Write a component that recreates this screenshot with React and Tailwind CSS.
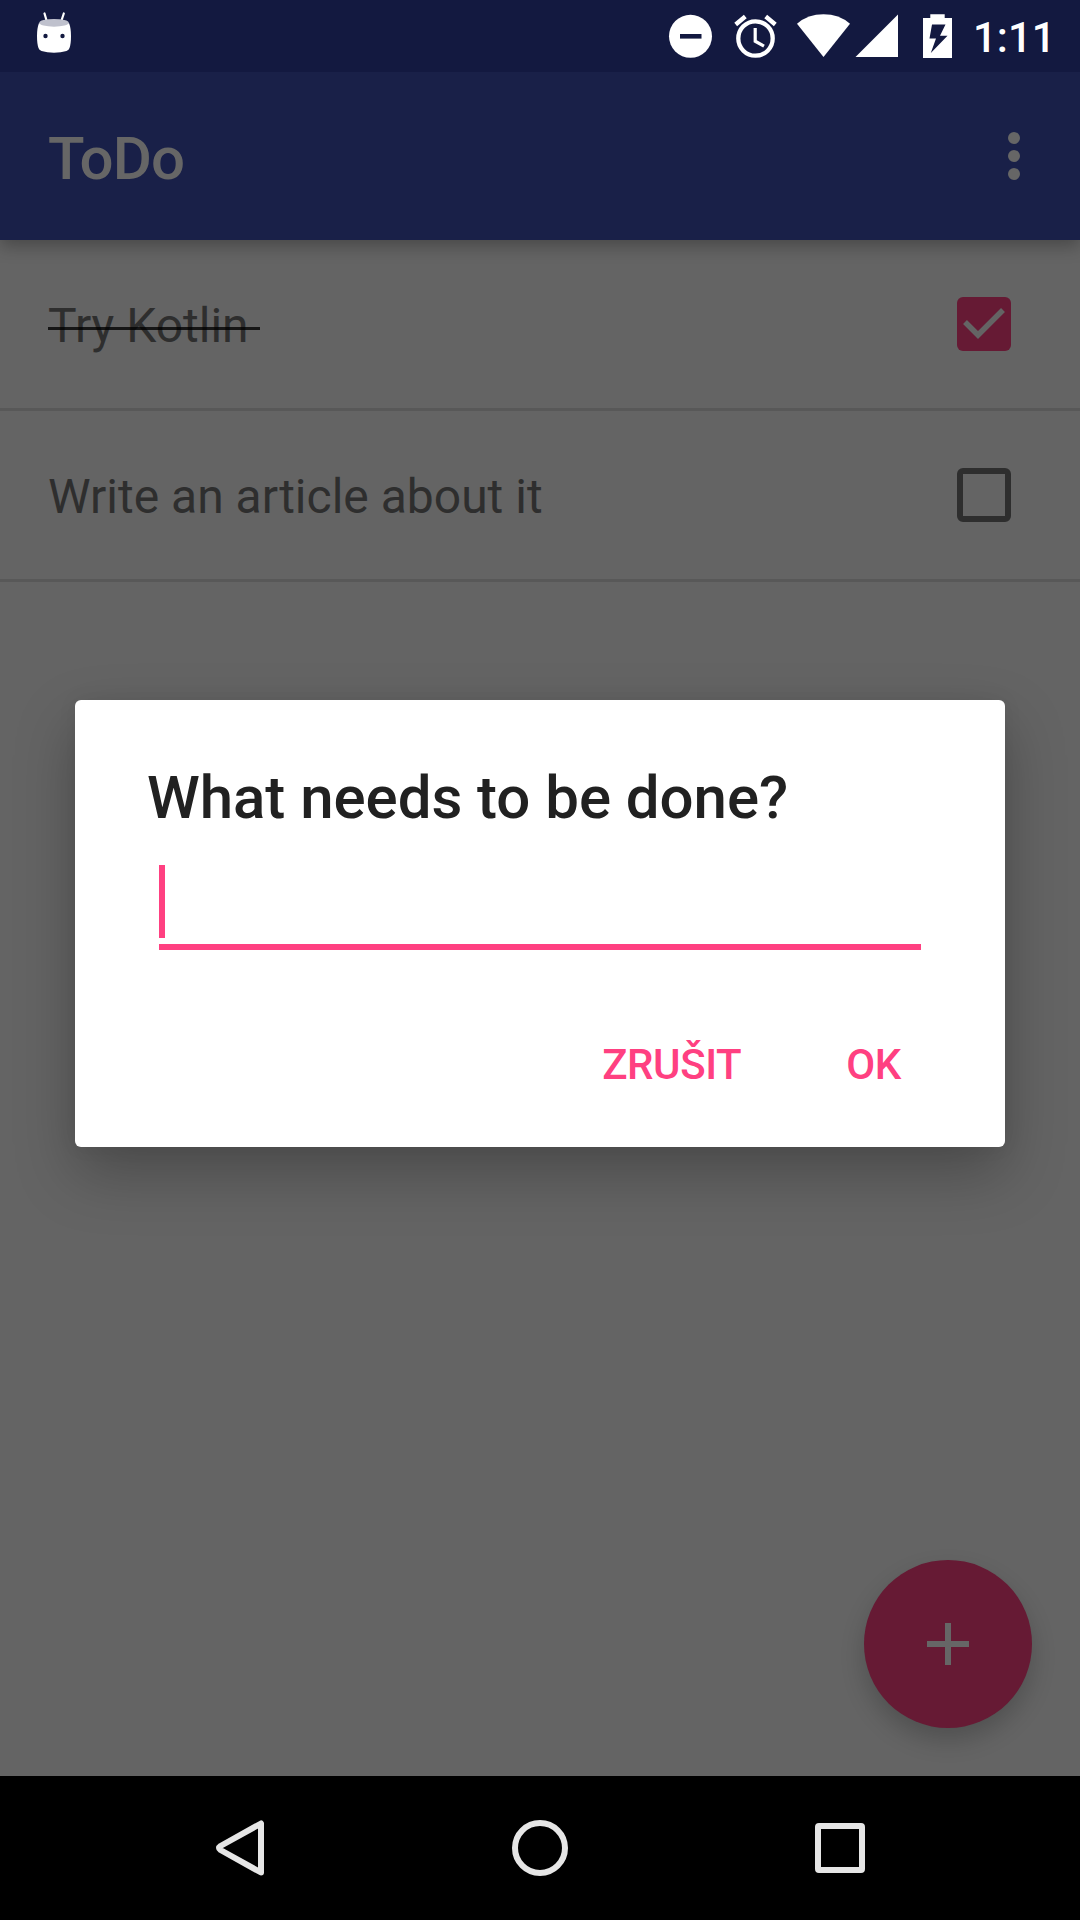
const font = "font-['Roboto',sans-serif]";

function StatusBar() {
  return (
    <div className="relative z-10 flex h-[72px] items-start justify-between bg-[#131940] text-white">
      <svg className="ml-[36px] mt-[12px]" width="36" height="42" viewBox="36 12 36 42">
        <path d="M44.5 13.5L47 22M63.8 13.5L61 22" stroke="#fff" strokeWidth="2.2" strokeLinecap="round" />
        <path d="M39 23Q54 29 69 23Q71 28 71 36Q71 44 69.5 48Q69 50 66.5 51Q61 52.8 54 52.8Q47 52.8 41.500 51Q39 50 38.500 48Q37 44 37 36Q37 28 39 23Z" fill="#fff" />
        <ellipse cx="54" cy="22.800" rx="14.800" ry="3.900" fill="#bfc1cd" />
        <circle cx="45.500" cy="36" r="2.200" fill="#131940" />
        <circle cx="62.500" cy="36" r="2.200" fill="#131940" />
      </svg>
      <div className="flex">
        <svg width="292" height="72" viewBox="664 0 292 72">
          <circle cx="690.500" cy="36.300" r="21.500" fill="#fff" />
          <rect x="680" y="34" width="21.500" height="4.600" fill="#131940" />
          <g fill="none" stroke="#fff">
            <circle cx="755.500" cy="38.500" r="17.200" strokeWidth="4.300" />
            <path d="M755.200 28v13.200l8.800 4.900" strokeWidth="3.200" />
            <path d="M735.700 24.500L745.300 16.500M775.300 24.500L765.700 16.500" strokeWidth="4.400" />
          </g>
          <path d="M797 23.700Q808 14.300 823.500 14.300Q839 14.300 850 23.700L823.500 57Z" fill="#fff" />
          <path d="M898 14.500V57H855.500Z" fill="#fff" />
          <path fillRule="evenodd" d="M930.300 14.300H944.700V18H952V58H923V18H930.300ZM932 24.500L929.500 38.500H936L930.800 53L947.500 35.700H940L945.500 24.500Z" fill="#fff" />
        </svg>
        <span className={`ml-[17px] w-[107px] text-[42px] font-medium leading-[76px] ${font}`}>1:11</span>
      </div>
    </div>
  );
}

function Toolbar() {
  return (
    <header className="relative flex h-[168px] items-center justify-between bg-[#192048] pl-[48px] pr-[60px] text-[#666] shadow-[0_6px_16px_rgba(0,0,0,0.28)]">
      <h1 className="pt-[5px] text-[60px] font-medium leading-[70px] tracking-[-0.9px]">ToDo</h1>
      <div className="flex flex-col gap-[6px]">
        <span className="size-3 rounded-full bg-[#666]" />
        <span className="size-3 rounded-full bg-[#666]" />
        <span className="size-3 rounded-full bg-[#666]" />
      </div>
    </header>
  );
}

function Checkbox({ checked }) {
  return checked ? (
    <span className="size-[54px] rounded-[6px] bg-[#661a34]">
      <svg width="54" height="54" viewBox="0 0 54 54" fill="none">
        <path d="M8 25L21 38L46 13" stroke="#646464" strokeWidth="5.500" />
      </svg>
    </span>
  ) : (
    <span className="size-[54px] rounded-[6px] border-[6px] border-[#2e2e2e]" />
  );
}

function TodoRow({ text, done }) {
  return (
    <li className="flex h-[171px] items-center justify-between border-b-[3px] border-[#585858] pl-[48px] pr-[69px]">
      <span className="relative whitespace-pre pt-[4px] text-[48px] leading-[56px] text-[#2e2e2e]">
        {text}
        {done && <span className="absolute left-0 top-[33px] h-[3px] w-[212px] bg-black/78" />}
      </span>
      <Checkbox checked={done} />
    </li>
  );
}

function Dialog() {
  return (
    <div className="absolute left-[75px] top-[700px] flex h-[447px] w-[930px] flex-col rounded-[6px] bg-white pl-[72px] pr-[84px] pt-[63px] shadow-[0_26px_60px_rgba(0,0,0,0.26),0_0_20px_rgba(0,0,0,0.06)]">
      <h2 className="text-[60px] font-medium leading-[70px] tracking-[-0.05px] text-[#212121]">What needs to be done?</h2>
      <div className="ml-[12px] mt-[32px] h-[85px] border-b-[6px] border-[#ff4081]">
        <div className="h-[73px] w-[6px] bg-[#ff4081]" />
      </div>
      <div className="mt-[90px] flex justify-end gap-[105px] pr-[20px] text-[42px] font-medium leading-[50px] tracking-[-0.4px] text-[#ff4081]">
        <button>ZRUŠIT</button>
        <button>OK</button>
      </div>
    </div>
  );
}

function NavBar() {
  return (
    <nav className="flex h-[144px] items-center justify-between bg-black pl-[212px] pr-[212px]">
      <svg width="56" height="60" viewBox="212 1818 56 60" fill="none">
        <path d="M261 1823.500V1872.500L220.500 1850Q217.500 1848 220.500 1846Z" stroke="#e6e6e6" strokeWidth="6" strokeLinejoin="round" />
      </svg>
      <svg width="60" height="60" viewBox="0 0 60 60" fill="none">
        <circle cx="30" cy="30" r="25" stroke="#e6e6e6" strokeWidth="6" />
      </svg>
      <svg width="56" height="60" viewBox="812 1818 56 60" fill="none">
        <rect x="818" y="1826" width="44" height="44" rx="1" stroke="#e6e6e6" strokeWidth="6" />
      </svg>
    </nav>
  );
}

export default function App() {
  return (
    <div className={`relative flex h-[1920px] w-[1080px] flex-col overflow-hidden bg-[#646464] ${font}`}>
      <StatusBar />
      <Toolbar />
      <ul className="grow">
        <TodoRow text="Try Kotlin " done />
        <TodoRow text="Write an article about it" />
      </ul>
      <button className="absolute left-[864px] top-[1560px] flex size-[168px] items-center justify-center rounded-full bg-[#661a34] shadow-[0_12px_24px_rgba(0,0,0,0.2)]">
        <svg width="42" height="42" viewBox="0 0 42 42">
          <path d="M21 0V42M0 21H42" stroke="#666" strokeWidth="6" />
        </svg>
      </button>
      <NavBar />
      <Dialog />
    </div>
  );
}
